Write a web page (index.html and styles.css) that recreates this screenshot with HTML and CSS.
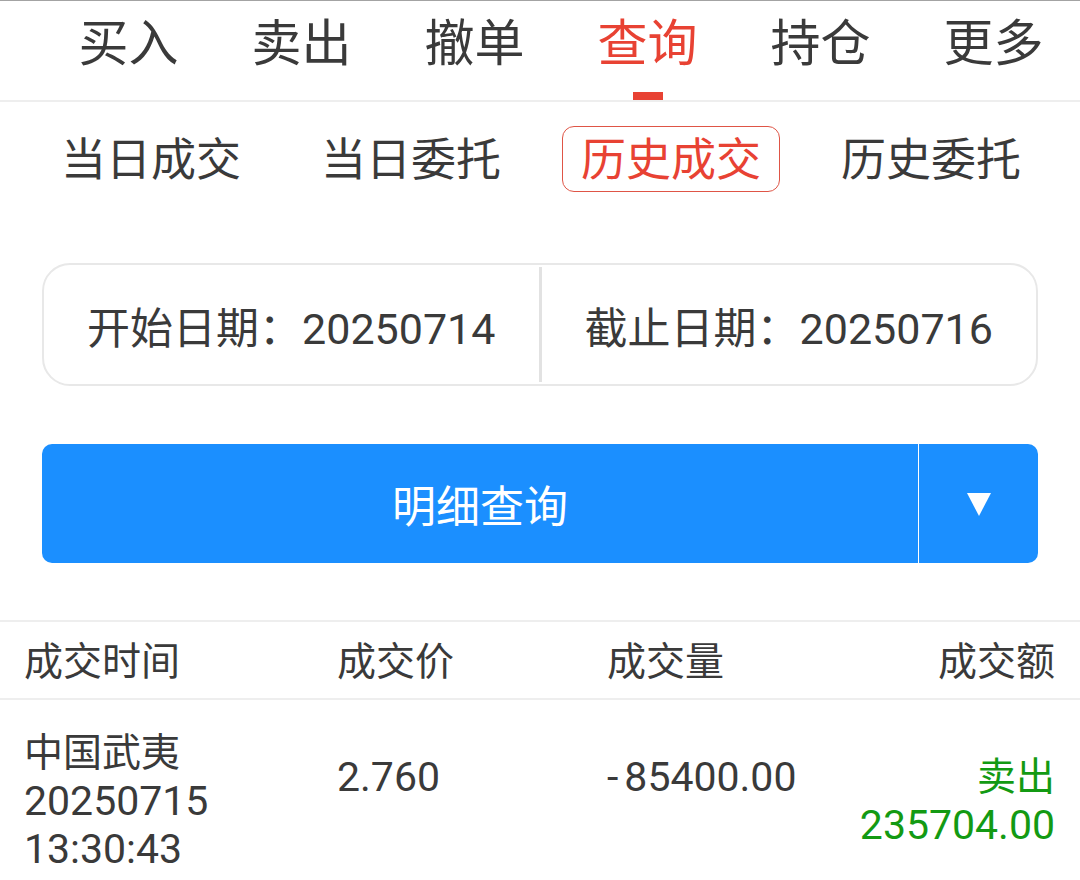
FILE: index.html
```html
<!DOCTYPE html>
<html lang="zh-CN">
<head>
<meta charset="utf-8">
<title>查询 - 历史成交</title>
<link rel="stylesheet" href="styles.css">
</head>
<body>
<nav class="topnav">
  <div class="tab">买入</div>
  <div class="tab">卖出</div>
  <div class="tab">撤单</div>
  <div class="tab active">查询<span class="indicator"></span></div>
  <div class="tab">持仓</div>
  <div class="tab">更多</div>
</nav>

<div class="subtabs">
  <div class="subtab">当日成交</div>
  <div class="subtab">当日委托</div>
  <div class="subtab active">历史成交</div>
  <div class="subtab">历史委托</div>
</div>

<section class="panel">
  <div class="datebox">
    <div class="date">开始日期：20250714</div>
    <div class="date-divider"></div>
    <div class="date">截止日期：20250716</div>
  </div>

  <div class="querybtn">
    <div class="query-main">明细查询</div>
    <div class="query-divider"></div>
    <div class="query-more">
      <svg width="24" height="23" viewBox="0 0 24 23"><polygon points="0,0 24,0 12,23" fill="#ffffff"/></svg>
    </div>
  </div>
</section>

<div class="table">
  <div class="thead">
    <div class="c1">成交时间</div>
    <div class="c2">成交价</div>
    <div class="c3">成交量</div>
    <div class="c4">成交额</div>
  </div>
  <div class="trow">
    <div class="c1">
      <div>中国武夷</div>
      <div class="num">20250715</div>
      <div class="num">13:30:43</div>
    </div>
    <div class="c2 single num">2.760</div>
    <div class="c3 single num"><span class="sign">-</span>85400.00</div>
    <div class="c4 sell">
      <div>卖出</div>
      <div class="num">235704.00</div>
    </div>
  </div>
</div>
</body>
</html>
```

FILE: styles.css
```css
html, body {
  margin: 0;
  padding: 0;
  background: #ffffff;
}

body {
  width: 1080px;
  font-family: Roboto, "Noto Sans CJK SC", sans-serif;
  color: #3a3a3a;
}

/* ---------- top navigation ---------- */
.topnav {
  display: flex;
  height: 99px;
  padding-left: 42px;
  border-top: 1px solid #a3a3a3;
  border-bottom: 2px solid #eeeeee;
}

.tab {
  flex: 1;
  display: flex;
  flex-direction: column;
  align-items: center;
  padding-top: 18px;
  font-size: 50px;
  line-height: 50px;
  color: #3a3a3a;
}

.tab.active {
  color: #e84233;
}

.indicator {
  display: block;
  width: 30px;
  height: 8px;
  margin-top: 23px;
  background: #e84233;
}

/* ---------- sub tabs ---------- */
.subtabs {
  display: flex;
  gap: 42px;
  padding-left: 42px;
  margin-top: 24px;
}

.subtab {
  padding: 11px 18px 8px;
  border: 1px solid transparent;
  border-radius: 12px;
  font-size: 45px;
  line-height: 45px;
  color: #3a3a3a;
}

.subtab.active {
  border-color: #df5546;
  color: #e84233;
}

/* ---------- dates + button ---------- */
.panel {
  padding: 0 42px;
}

.datebox {
  display: flex;
  height: 119px;
  margin-top: 71px;
  border: 2px solid #e8e8e8;
  border-radius: 28px;
}

.date {
  flex: 1;
  display: flex;
  align-items: center;
  justify-content: center;
  font-size: 43px;
  color: #3a3a3a;
}

.date-divider {
  width: 3px;
  margin: 2px 0;
  background: #e2e2e2;
}

.querybtn {
  display: flex;
  height: 119px;
  margin-top: 58px;
  border-radius: 10px;
  background: #1b8fff;
  color: #ffffff;
}

.query-main {
  flex: 1;
  display: flex;
  align-items: center;
  justify-content: center;
  font-size: 44px;
}

.query-divider {
  width: 1px;
  background: #ffffff;
}

.query-more {
  width: 119px;
  display: flex;
  align-items: center;
  justify-content: center;
  padding-top: 2px;
}

.query-more svg {
  display: block;
}

/* ---------- table ---------- */
.table {
  margin-top: 57px;
}

.thead,
.trow {
  display: grid;
  grid-template-columns: 313px 270px 1fr auto;
  padding: 0 25px 0 24px;
  font-size: 39px;
  color: #3a3a3a;
}

.thead {
  align-items: center;
  line-height: 40px;
  padding-top: 4px;
  height: 72px;
  border-top: 2px solid #eeeeee;
  border-bottom: 2px solid #eeeeee;
}

.trow {
  align-items: center;
  line-height: 48px;
  padding-top: 29px;
  padding-bottom: 30px;
}

.num {
  font-size: 41px;
}

.sign {
  margin-right: 6px;
}

.c4 {
  text-align: right;
}

.single {
  padding-bottom: 48px;
}

.sell {
  color: #139a13;
}
```
